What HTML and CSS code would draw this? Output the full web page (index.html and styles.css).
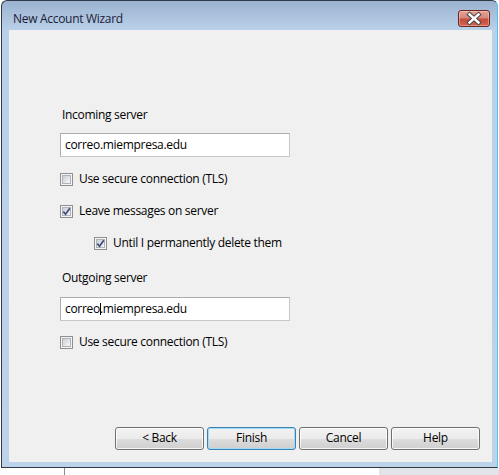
FILE: index.html
```html
<!DOCTYPE html>
<html>
<head>
<meta charset="utf-8">
<link rel="stylesheet" href="styles.css">
</head>
<body>
<div class="screen">
  <div class="window">
    <div class="titlebar">
      <span class="title">New Account Wizard</span>
      <span class="close">
        <svg width="30" height="15" viewBox="0 0 30 15">
          <path d="M10.5 3.5 L19.5 11.5 M19.5 3.5 L10.5 11.5" stroke="#474747" stroke-width="4.4" stroke-linecap="square" fill="none"/>
          <path d="M10.5 3.5 L19.5 11.5 M19.5 3.5 L10.5 11.5" stroke="#ffffff" stroke-width="2.4" stroke-linecap="square" fill="none"/>
        </svg>
      </span>
    </div>
    <div class="client">
      <div class="form">
        <div class="label">Incoming server</div>
        <div class="input in1">correo.miempresa.edu</div>
        <div class="check cb1"><span class="box"><span class="inner"></span></span><span class="text">Use secure connection (TLS)</span></div>
        <div class="check cb2"><span class="box"><span class="inner"><svg width="9" height="9" viewBox="0 0 9 9"><path d="M1.3 4.6 L3.6 7.2 L7.8 1.2" stroke="#3b4c7a" stroke-width="1.7" fill="none"/></svg></span></span><span class="text">Leave messages on server</span></div>
        <div class="check cb3 indent"><span class="box"><span class="inner"><svg width="9" height="9" viewBox="0 0 9 9"><path d="M1.3 4.6 L3.6 7.2 L7.8 1.2" stroke="#3b4c7a" stroke-width="1.7" fill="none"/></svg></span></span><span class="text">Until I permanently delete them</span></div>
        <div class="label lb2">Outgoing server</div>
        <div class="input in2">correo<span class="caret"></span>.miempresa.edu</div>
        <div class="check cb4"><span class="box"><span class="inner"></span></span><span class="text">Use secure connection (TLS)</span></div>
      </div>
      <div class="buttons">
        <span class="btn">&lt; Back</span>
        <span class="btn default">Finish</span>
        <span class="btn">Cancel</span>
        <span class="btn">Help</span>
      </div>
    </div>
  </div>
  <div class="desk"></div>
</div>
</body>
</html>
```

FILE: styles.css
```css
html, body {
  margin: 0;
  padding: 0;
  background: #ffffff;
}
body {
  font-family: "Open Sans", "Noto Sans", sans-serif;
  font-size: 12px;
  letter-spacing: -0.3px;
  color: #000;
}
.screen {
  width: 499px;
  height: 475px;
  overflow: hidden;
}
.window {
  margin-left: 1px;
  width: 497px;
  height: 468px;
  box-sizing: border-box;
  border: 1px solid #303a46;
  border-right-color: #4cc4ec;
  border-radius: 6px 6px 0 0;
  background: linear-gradient(#9bb3cf, #b9d0e9 29px, #bcd3ea);
  padding: 0 5px 5px 7px;
  display: flex;
  flex-direction: column;
}
.titlebar {
  height: 29px;
  display: flex;
  justify-content: space-between;
  align-items: flex-start;
}
.title {
  margin-top: 10px;
  margin-left: 4px;
  line-height: 15px;
  font-size: 12px;
  color: #1c1c38;
}
.close {
  margin-top: 9px;
  margin-right: 2px;
  width: 32px;
  height: 17px;
  box-sizing: border-box;
  border: 1px solid #6a2823;
  border-radius: 3px;
  background: linear-gradient(#e6a397, #d7877b 45%, #c44c3c 55%, #cf6452);
  box-shadow: inset 0 0 0 1px rgba(255, 210, 200, 0.45);
  display: flex;
  align-items: center;
  justify-content: center;
}
.close svg {
  display: block;
}
.client {
  height: 432px;
  background: #f0f0f0;
  display: flex;
  flex-direction: column;
  box-sizing: border-box;
  padding: 77px 12px 12px 51px;
}
.form {
  display: flex;
  flex-direction: column;
  align-items: flex-start;
}
.label {
  height: 16px;
  line-height: 16px;
  padding-left: 2px;
}
.lb2 {
  margin-top: 20px;
}
.input {
  width: 230px;
  height: 24px;
  box-sizing: border-box;
  border: 1px solid #abadb3;
  border-right-color: #c4c7cc;
  border-bottom-color: #c4c7cc;
  background: #fff;
  line-height: 22px;
  padding-left: 4px;
  white-space: nowrap;
}
.in1 {
  margin-top: 10px;
}
.in2 {
  margin-top: 11px;
}
.caret {
  display: inline-block;
  width: 1px;
  height: 12px;
  background: #000;
  vertical-align: -2px;
  margin-right: -1px;
}
.check {
  height: 16px;
  line-height: 16px;
  display: flex;
  align-items: flex-start;
  gap: 6px;
}
.check .text {
  padding-top: 1px;
}
.cb1 { margin-top: 13px; }
.cb2 { margin-top: 16px; }
.cb3 { margin-top: 16px; }
.cb4 { margin-top: 12px; }
.indent {
  padding-left: 34px;
}
.box {
  margin-top: 3px;
  width: 13px;
  height: 13px;
  box-sizing: border-box;
  border: 1px solid #8e8f8f;
  background: #f4f4f4;
  padding: 1px;
  flex: none;
}
.inner {
  display: block;
  width: 9px;
  height: 9px;
  box-sizing: border-box;
  border: 1px solid #aeb3b9;
  background: linear-gradient(135deg, #cbcfd5, #f7f7f7);
  position: relative;
}
.inner svg {
  position: absolute;
  left: -1px;
  top: -1px;
}
.buttons {
  margin-top: auto;
  display: flex;
  justify-content: flex-end;
  gap: 3px;
}
.btn {
  width: 89px;
  height: 23px;
  box-sizing: border-box;
  border: 1px solid #707070;
  border-radius: 3px;
  background: linear-gradient(#f2f2f2, #ebebeb 50%, #dddddd 50%, #cfcfcf);
  box-shadow: inset 0 0 0 1px rgba(255, 255, 255, 0.8);
  text-align: center;
  line-height: 17px;
  padding-top: 1px;
}
.btn.default {
  border-color: #3c7fb1;
  box-shadow: inset 0 0 0 1px #9fdcf7;
}
.desk {
  height: 7px;
  background: linear-gradient(to right, #ffffff 64px, #8c8c8c 64px, #8c8c8c 65px, #ffffff 65px, #ffffff 379px, #e1e5ea 379px);
}
```
